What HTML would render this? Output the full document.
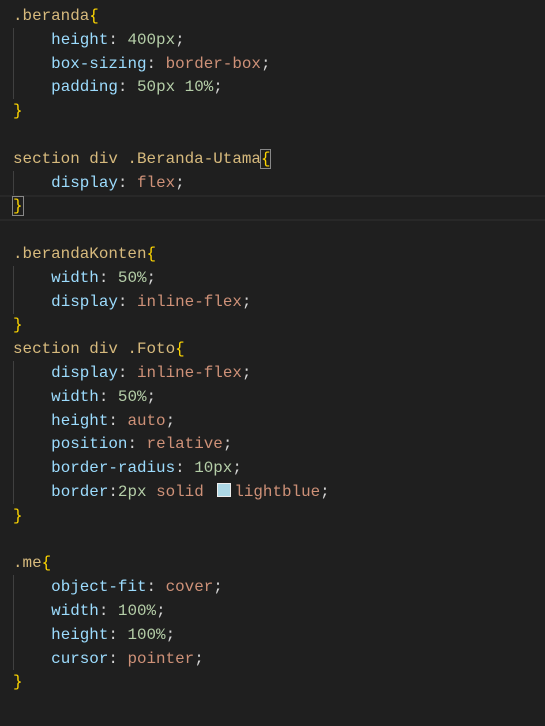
<!DOCTYPE html>
<html><head><meta charset="utf-8"><style>
body{margin:0;background:#1f1f1f;width:545px;height:726px;overflow:hidden;}
.c{position:absolute;left:13px;top:5px;font-family:"Liberation Mono",monospace;font-size:15.9px;line-height:23.8px;color:#d4d4d4;white-space:pre;}
.s{color:#d7ba7d}.p{color:#9cdcfe}.v{color:#ce9178}.n{color:#b5cea8}.b{color:#ffd700}
.g{position:absolute;left:13px;width:1px;background:#404040}
.hl{position:absolute;left:0;right:0;top:195px;height:22px;border-top:2px solid #282828;border-bottom:2px solid #282828}
.box{outline:1px solid #888;}
.sw{display:inline-block;width:12px;height:12px;background:lightblue;border:1px solid #eee;vertical-align:-1px;margin-left:4px;margin-right:3px}
</style></head><body>
<div class="hl"></div>
<div class="g" style="top:28px;height:71px"></div>
<div class="g" style="top:171px;height:24px"></div>
<div class="g" style="top:266px;height:48px"></div>
<div class="g" style="top:361px;height:143px"></div>
<div class="g" style="top:575px;height:95px"></div>
<div class="c"><span class="s">.beranda</span><span class="b">{</span>
    <span class="p">height</span>: <span class="n">400px</span>;
    <span class="p">box-sizing</span>: <span class="v">border-box</span>;
    <span class="p">padding</span>: <span class="n">50px 10%</span>;
<span class="b">}</span>

<span class="s">section div .Beranda-Utama</span><span class="b box">{</span>
    <span class="p">display</span>: <span class="v">flex</span>;
<span class="b box">}</span>

<span class="s">.berandaKonten</span><span class="b">{</span>
    <span class="p">width</span>: <span class="n">50%</span>;
    <span class="p">display</span>: <span class="v">inline-flex</span>;
<span class="b">}</span>
<span class="s">section div .Foto</span><span class="b">{</span>
    <span class="p">display</span>: <span class="v">inline-flex</span>;
    <span class="p">width</span>: <span class="n">50%</span>;
    <span class="p">height</span>: <span class="v">auto</span>;
    <span class="p">position</span>: <span class="v">relative</span>;
    <span class="p">border-radius</span>: <span class="n">10px</span>;
    <span class="p">border</span>:<span class="n">2px</span> <span class="v">solid</span> <span class="sw"></span><span class="v">lightblue</span>;
<span class="b">}</span>

<span class="s">.me</span><span class="b">{</span>
    <span class="p">object-fit</span>: <span class="v">cover</span>;
    <span class="p">width</span>: <span class="n">100%</span>;
    <span class="p">height</span>: <span class="n">100%</span>;
    <span class="p">cursor</span>: <span class="v">pointer</span>;
<span class="b">}</span></div>
</body></html>
